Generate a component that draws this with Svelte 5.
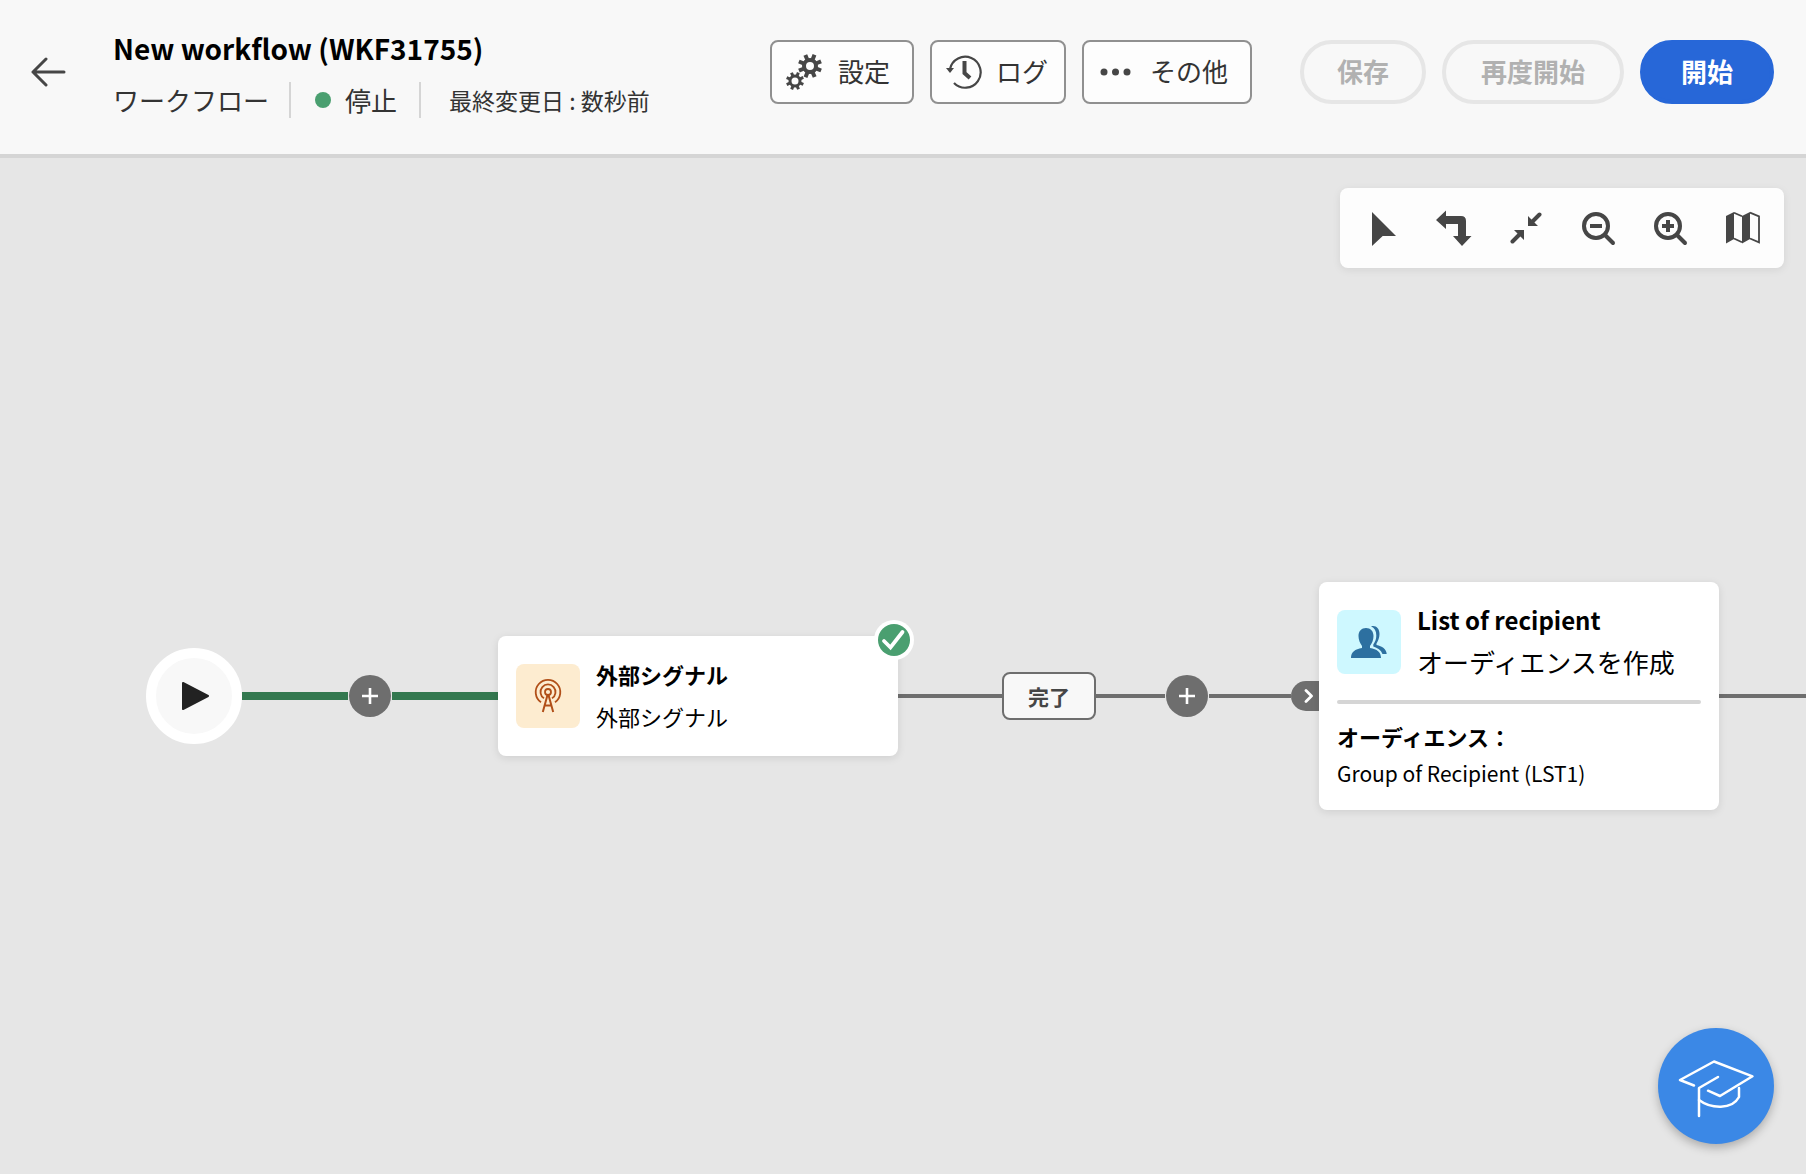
<script>
  const teeth = [0, 45, 90, 135, 180, 225, 270, 315];
  const gears = [
    { x: 24, y: 12, ring: 6, width: 4, inner: 7, outer: 12, tooth: 4 },
    { x: 9, y: 27, ring: 5, width: 3, inner: 5, outer: 9, tooth: 3 },
  ];
</script>

{#snippet addButton()}
  <button class="add" aria-label="追加">
    <svg width="16" height="16" viewBox="0 0 16 16"><path d="M8 0V16M0 8H16" stroke="#fff" stroke-width="2.6" /></svg>
  </button>
{/snippet}

<div class="page">
  <header>
    <button class="back" aria-label="戻る">
      <svg width="36" height="32" viewBox="0 0 36 32" fill="none" stroke="#464646" stroke-width="3" stroke-linecap="round" stroke-linejoin="round">
        <path d="M15 3L2 16L15 29M2 16H33" />
      </svg>
    </button>
    <div class="heading">
      <h1>New workflow (WKF31755)</h1>
      <div class="meta">
        <span class="kind">ワークフロー</span>
        <span class="status"><i></i>停止</span>
        <span class="modified">最終変更日 : 数秒前</span>
      </div>
    </div>
    <div class="tools">
      <button class="tool settings">
        <svg width="36" height="36" viewBox="0 0 36 36" fill="none" stroke="#464646">
          {#each gears as g}
            <circle cx={g.x} cy={g.y} r={g.ring} stroke-width={g.width} />
            {#each teeth as a}
              <path d="M{g.x} {g.y - g.inner}V{g.y - g.outer}" stroke-width={g.tooth} transform="rotate({a + 22} {g.x} {g.y})" />
            {/each}
          {/each}
        </svg>
        <span>設定</span>
      </button>
      <button class="tool log">
        <svg width="36" height="36" viewBox="0 0 36 36" fill="none" stroke="#464646">
          <path d="M4 15A15.500 15.500 0 1 1 8 29" stroke-width="2.200" />
          <path d="M0 14H8L4 19Z" fill="#464646" stroke="none" />
          <path d="M18.500 7V19L24 24" stroke-width="4" />
        </svg>
        <span>ログ</span>
      </button>
      <button class="tool more">
        <svg width="36" height="36" viewBox="0 0 36 36" fill="#464646">
          <circle cx="6" cy="18" r="3.500" /><circle cx="17.500" cy="18" r="3.500" /><circle cx="29" cy="18" r="3.500" />
        </svg>
        <span>その他</span>
      </button>
    </div>
    <div class="actions">
      <button class="pill" disabled>保存</button>
      <button class="pill wide" disabled>再度開始</button>
      <button class="pill primary">開始</button>
    </div>
  </header>

  <main>
    <div class="toolbar">
      <button aria-label="選択"><svg viewBox="0 0 36 36"><path d="M8 2V36L18.700 26H32Z" /></svg></button>
      <button aria-label="向きを変更">
        <svg viewBox="0 0 36 36"><path d="M0 10L10 0.500V6H25Q30 6 30 11V26H35.500L26 36L17 26H22V14H10V19Z" /></svg>
      </button>
      <button aria-label="画面に合わせる">
        <svg viewBox="0 0 36 36">
          <path d="M20 6V16H30ZM16 30V20H6Z" />
          <path d="M31.500 4.500L24 12M4.500 31.500L12 24" stroke="#464646" stroke-width="4" stroke-linecap="round" />
        </svg>
      </button>
      <button aria-label="縮小">
        <svg viewBox="0 0 36 36" class="line"><circle cx="16" cy="16" r="12" /><path d="M10 16H22" /><path d="M25 25L33 33" stroke-linecap="round" /></svg>
      </button>
      <button aria-label="拡大">
        <svg viewBox="0 0 36 36" class="line"><circle cx="16" cy="16" r="12" /><path d="M10 16H22M16 10V22" /><path d="M25 25L33 33" stroke-linecap="round" /></svg>
      </button>
      <button aria-label="マップ">
        <svg viewBox="0 0 36 36">
          <path d="M2 6L10 2V29L2 33.500ZM18 6L26 2V29L18 33.500Z" />
          <path d="M10 2.700L18 6.300M10 28.500L18 32.300M26 2.700L35 6.300V32.300L26 28.500" fill="none" stroke="#464646" stroke-width="1.800" />
        </svg>
      </button>
    </div>

    <div class="flow">
      <button class="start" aria-label="開始ノード">
        <svg width="76" height="76" viewBox="0 0 76 76"><path d="M27 25L52 38L27 51Z" fill="#222" stroke="#222" stroke-width="2" stroke-linejoin="round" /></svg>
      </button>
      <span class="link done"></span>
      {@render addButton()}
      <span class="link done"></span>

      <article class="card">
        <div class="top">
          <span class="icon signal">
            <svg width="64" height="64" viewBox="0 0 64 64" fill="none" stroke="#b14f18" stroke-width="1.800">
              <circle cx="32" cy="28" r="3" />
              <path d="M28 34.300A7.500 7.500 0 1 1 36 34.300" />
              <path d="M25 38.300A12.300 12.300 0 1 1 39 38.300" />
              <path d="M31.500 31L26.800 48M32.500 31L37.200 48M29 41.500H35" stroke-width="2" />
            </svg>
          </span>
          <div class="names">
            <h2>外部シグナル</h2>
            <p>外部シグナル</p>
          </div>
        </div>
        <svg class="badge" width="40" height="40" viewBox="0 0 40 40">
          <circle cx="20" cy="20" r="20" fill="#fff" /><circle cx="20" cy="20" r="16" fill="#4a9f70" />
          <path d="M10 21L16.500 27.500L28.500 12" fill="none" stroke="#fff" stroke-width="3.800" stroke-linecap="round" />
        </svg>
      </article>

      <span class="link out"></span>
      <span class="transition">完了</span>
      <span class="link short"></span>
      {@render addButton()}
      <span class="link entry"></span>
      <span class="port">
        <svg width="10" height="14" viewBox="0 0 10 14"><path d="M2 1.500L7.500 7L2 12.500" fill="none" stroke="#fff" stroke-width="2.800" stroke-linecap="round" stroke-linejoin="round" /></svg>
      </span>

      <article class="card audience">
        <div class="top">
          <span class="icon people">
            <svg width="64" height="64" viewBox="0 0 64 64" fill="#2d70a0">
              <path d="M14 48C14 42 18 39 25 38V36C23 33 21.500 30 21.500 26C21.500 21 24.500 18 29 18S36.500 21 36.500 26C36.500 30 35 33 33 36V38C40 39 44 42 44 48Z" />
              <path d="M34 16.300C39 15 42.500 18.500 42.500 24C42.500 28 41 31 39.500 33.500V35C45 36 49.500 39 49.700 44H45.500C44 40 40.500 38 36.300 36.500V34.500C38.300 31.500 39.300 29 39.300 25.500C39.300 21 37.500 18 34 16.300Z" />
            </svg>
          </span>
          <div class="names">
            <h2 class="latin">List of recipient</h2>
            <p class="large">オーディエンスを作成</p>
          </div>
        </div>
        <hr />
        <div class="detail">
          <strong>オーディエンス：</strong>
          <span class="group">Group of Recipient (LST1)</span>
        </div>
      </article>
      <span class="link tail"></span>
    </div>

    <button class="learn" aria-label="学習">
      <svg width="116" height="116" viewBox="0 0 116 116" fill="none" stroke="#fff" stroke-width="2.500" stroke-linecap="round" stroke-linejoin="round">
        <path d="M36 57.500L22 52L56 33.500L94.500 48.300L62 68L50 62.700" />
        <path d="M60 49L41 60V88" />
        <path d="M41 72C53 81 74 82 81 69V60" />
      </svg>
    </button>
  </main>
</div>

<style>
  :global(body) {
    margin: 0;
  }
  .page {
    display: flex;
    flex-direction: column;
    min-height: 100vh;
    color: #000;
    background: #e6e6e6;
    font-family: "Noto Sans CJK JP", sans-serif;
    font-size: 22px;
  }
  button {
    display: flex;
    align-items: center;
    justify-content: center;
    margin: 0;
    padding: 0;
    border: 0;
    background: none;
    font: inherit;
    color: inherit;
    white-space: nowrap;
  }
  svg {
    display: block;
    flex: none;
  }
  h1, h2, p {
    margin: 0;
  }

  header {
    display: flex;
    align-items: flex-start;
    box-sizing: border-box;
    height: 158px;
    padding: 0 32px 0 31px;
    background: #f8f8f8;
    border-bottom: 4px solid #d5d5d5;
  }
  .back {
    height: 64px;
    margin: 40px 46px 0 0;
  }
  .heading {
    margin-top: 26px;
    white-space: nowrap;
  }
  h1 {
    font-size: 28px;
    line-height: 44px;
  }
  .meta {
    display: flex;
    align-items: center;
    height: 36px;
    margin-top: 12px;
    color: #333;
    line-height: 36px;
  }
  .meta .kind, .meta .status {
    display: flex;
    align-items: center;
    gap: 14px;
    border-right: 2px solid #d5d5d5;
    font-size: 26px;
  }
  .meta .kind {
    padding-right: 20px;
  }
  .meta .status {
    padding: 0 22px 0 24px;
  }
  .status i {
    width: 16px;
    height: 16px;
    border-radius: 50%;
    background: #4a9f70;
  }
  .modified {
    padding-left: 28px;
    font-size: 23px;
  }
  .tools, .actions {
    display: flex;
    gap: 16px;
    margin-top: 40px;
    font-size: 26px;
  }
  .tools {
    margin-left: auto;
  }
  .actions {
    margin-left: 48px;
  }
  .tool {
    box-sizing: border-box;
    height: 64px;
    gap: 16px;
    padding: 0 22px 0 14px;
    border: 2px solid #909090;
    border-radius: 8px;
    background: #fdfdfd;
    color: #333;
  }
  .tool span {
    padding-bottom: 4px;
  }
  .log {
    gap: 14px;
    padding-right: 16px;
  }
  .pill {
    box-sizing: border-box;
    height: 64px;
    padding: 0 33px 4px;
    border: 4px solid #e6e6e6;
    border-radius: 32px;
    color: #b1b1b1;
    font-weight: 700;
  }
  .wide {
    padding: 0 35px 4px;
  }
  .primary {
    padding: 0 37px 4px;
    border-color: #2767d8;
    background: #2767d8;
    color: #fff;
  }

  main {
    position: relative;
    display: flex;
    flex: 1;
    flex-direction: column;
    padding: 30px 0 50px;
    overflow: hidden;
  }
  .toolbar {
    display: flex;
    align-self: flex-end;
    box-sizing: border-box;
    height: 80px;
    margin-right: 22px;
    padding: 0 6px;
    border-radius: 8px;
    background: #fdfdfd;
    box-shadow: 0 2px 8px rgba(0, 0, 0, 0.08);
  }
  .toolbar button {
    width: 72px;
  }
  .toolbar svg {
    width: 36px;
    height: 36px;
    fill: #464646;
  }
  .toolbar .line {
    fill: none;
    stroke: #464646;
    stroke-width: 4px;
  }

  .flow {
    display: flex;
    flex: 1;
    align-items: center;
    padding-left: 146px;
  }
  .flow > :global(*) {
    flex: none;
  }
  .start {
    border: 10px solid #fff;
    border-radius: 50%;
    background: #f8f8f8;
  }
  .link {
    width: 104px;
    height: 4px;
    background: #6e6e6e;
  }
  .link.done {
    width: 106px;
    height: 8px;
    background: #33784f;
  }
  .link.short {
    width: 69px;
  }
  .link.entry {
    width: 82px;
  }
  .flow .tail {
    flex: 1;
  }
  .add {
    width: 42px;
    height: 42px;
    margin: 0 1px;
    border-radius: 50%;
    background: #6e6e6e;
  }
  .card {
    position: relative;
    box-sizing: border-box;
    width: 400px;
    padding: 28px 18px;
    border-radius: 8px;
    background: #fff;
    box-shadow: 0 2px 8px rgba(0, 0, 0, 0.1);
  }
  .top {
    display: flex;
    align-items: center;
    gap: 16px;
    height: 64px;
  }
  .icon {
    border-radius: 8px;
  }
  .signal {
    background: #fdecd0;
  }
  .people {
    background: #cef8ff;
  }
  .names {
    padding-bottom: 2px;
    line-height: 42px;
    white-space: nowrap;
  }
  h2 {
    font-size: 22px;
  }
  .latin {
    font-size: 24px;
  }
  .large {
    font-size: 26px;
  }
  .badge {
    position: absolute;
    top: -16px;
    right: -16px;
  }
  .transition {
    box-sizing: border-box;
    padding: 0 24px;
    border: 2px solid #6e6e6e;
    border-radius: 8px;
    background: #f8f8f8;
    color: #464646;
    font-size: 21px;
    font-weight: 700;
    line-height: 44px;
  }
  .port {
    display: flex;
    align-items: center;
    justify-content: flex-end;
    box-sizing: border-box;
    width: 28px;
    height: 30px;
    padding-right: 5px;
    border-radius: 15px 0 0 15px;
    background: #6e6e6e;
  }
  .audience {
    padding-bottom: 18px;
  }
  hr {
    height: 4px;
    margin: 26px 0 14px;
    border: 0;
    border-radius: 2px;
    background: #d5d5d5;
  }
  .detail {
    display: flex;
    flex-direction: column;
    line-height: 37px;
  }
  .group {
    font-size: 21px;
  }

  .learn {
    position: absolute;
    right: 32px;
    bottom: 30px;
    border-radius: 50%;
    background: #3b88e6;
    box-shadow: 0 4px 10px rgba(0, 0, 0, 0.25);
  }
</style>
